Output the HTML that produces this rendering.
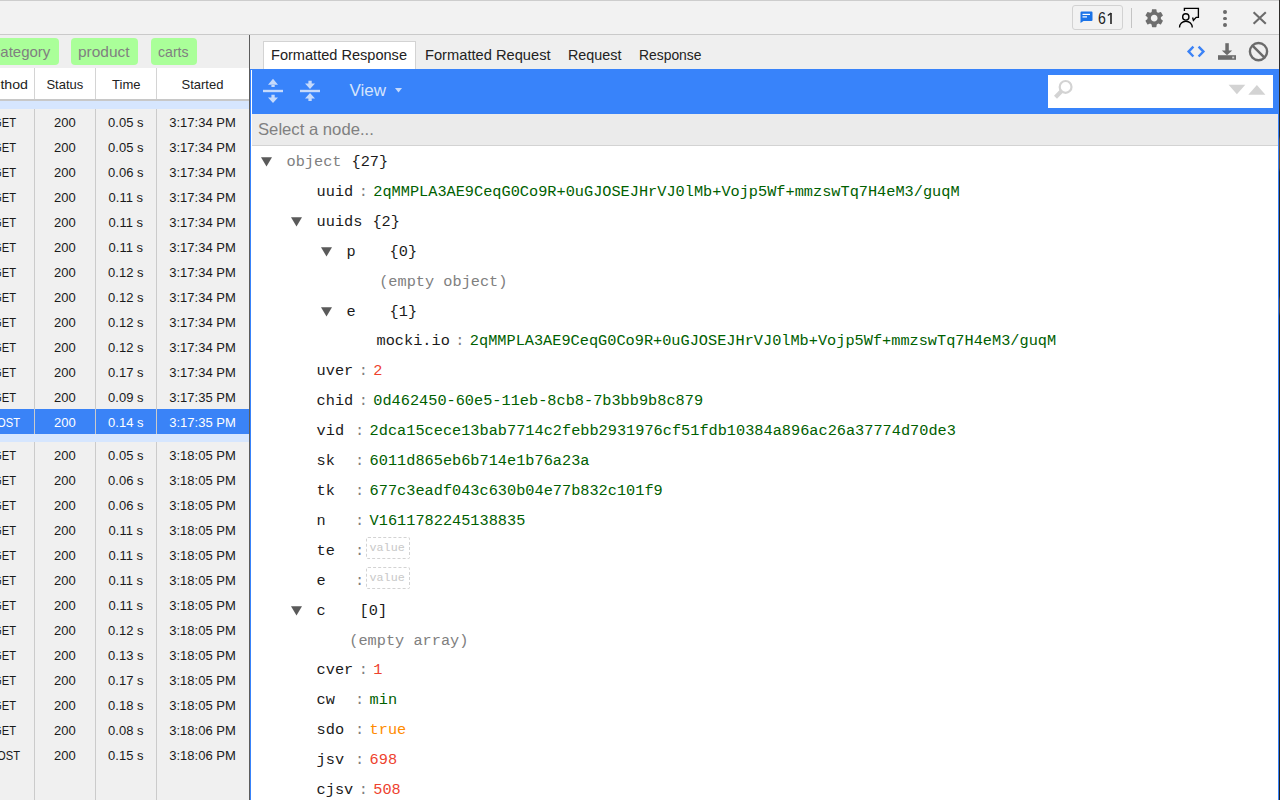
<!DOCTYPE html>
<html><head><meta charset="utf-8"><title>JSON</title>
<style>
html,body{margin:0;padding:0;}
body{width:1280px;height:800px;overflow:hidden;position:relative;background:#fff;font-family:"Liberation Sans",sans-serif;}
body>div,body>svg{position:absolute;box-sizing:border-box;}
.t{white-space:pre;}
</style></head><body>
<div style="left:0px;top:0px;width:1280px;height:35px;background:#f2f2f2;"></div>
<div style="left:0px;top:0px;width:1280px;height:1px;background:#cdcdcd;"></div>
<div style="left:0px;top:34px;width:1280px;height:1px;background:#cacaca;"></div>
<div style="left:1072px;top:5px;width:51px;height:25px;border:1px solid #d2d2d2;border-radius:3px;"></div>
<svg style="left:1080px;top:11px" width="13" height="12" viewBox="0 0 13 12"><path d="M1.5 0.5h10a1 1 0 0 1 1 1v7.5a1 1 0 0 1-1 1H3.5L0.5 12V1.5a1 1 0 0 1 1-1z" fill="#1a73e8"/><rect x="2.5" y="2.8" width="7.5" height="1.2" fill="#fff"/><rect x="2.5" y="5.3" width="4.5" height="1.2" fill="#fff"/></svg>
<div class="t" style="left:1097.90px;top:10.76px;font:16.0px/16.0px 'Liberation Sans', sans-serif;color:#222;transform:scaleX(0.88);transform-origin:left center;">6</div>
<svg style="left:1104px;top:11px" width="10" height="14" viewBox="0 0 10 14"><path d="M7.0 2.0V13.0" stroke="#222" stroke-width="1.6"/><path d="M7.1 2.1L3.8 4.5" stroke="#222" stroke-width="1.4"/></svg>
<div style="left:1131px;top:8px;width:1px;height:20px;background:#c4c4c4;"></div>
<svg style="left:1143.2px;top:7px" width="22.4" height="22.4" viewBox="0 0 24 24"><path fill="#6e6e6e" d="M19.14 12.94c.04-.3.06-.61.06-.94 0-.32-.02-.64-.07-.94l2.03-1.58a.49.49 0 0 0 .12-.61l-1.92-3.32a.488.488 0 0 0-.59-.22l-2.39.96c-.5-.38-1.03-.7-1.62-.94l-.36-2.54a.484.484 0 0 0-.48-.41h-3.84c-.24 0-.43.17-.47.41l-.36 2.54c-.59.24-1.13.57-1.62.94l-2.39-.96c-.22-.08-.47 0-.59.22L2.74 8.87c-.12.21-.08.47.12.61l2.03 1.58c-.05.3-.09.63-.09.94s.02.64.07.94l-2.03 1.58a.49.49 0 0 0-.12.61l1.92 3.32c.12.22.37.29.59.22l2.39-.96c.5.38 1.03.7 1.62.94l.36 2.54c.05.24.24.41.48.41h3.84c.24 0 .44-.17.47-.41l.36-2.54c.59-.24 1.13-.56 1.62-.94l2.39.96c.22.08.47 0 .59-.22l1.92-3.32c.12-.22.07-.47-.12-.61l-2.01-1.58zM12 15.6c-1.98 0-3.6-1.62-3.6-3.6s1.62-3.6 3.6-3.6 3.6 1.62 3.6 3.6-1.62 3.6-3.6 3.6z"/></svg>
<svg style="left:1175px;top:5px" width="28" height="25" viewBox="0 0 28 25"><g fill="none" stroke="#000" stroke-width="1.35"><path d="M9.4 6V3.4H23.4V12.3H21.2L18.4 15.3L17.6 12.5"/><circle cx="10.8" cy="11.9" r="3.15"/><path d="M4.5 22.5A6.3 6.2 0 0 1 17.3 22.5"/></g></svg>
<div style="left:1223.1px;top:10.1px;width:3.8px;height:3.8px;border-radius:50%;background:#6b6b6b"></div>
<div style="left:1223.1px;top:16.6px;width:3.8px;height:3.8px;border-radius:50%;background:#6b6b6b"></div>
<div style="left:1223.1px;top:23.0px;width:3.8px;height:3.8px;border-radius:50%;background:#6b6b6b"></div>
<svg style="left:1252px;top:11px" width="15" height="14" viewBox="0 0 15 14"><path d="M1.6 1.2L13.8 12.8M13.8 1.2L1.6 12.8" stroke="#6b6b6b" stroke-width="2.1"/></svg>
<div style="left:0px;top:35px;width:249px;height:765px;background:#efefef;"></div>
<div style="left:0px;top:109px;width:249px;height:691px;background:#f0f0f0;"></div>
<div style="left:-12px;top:38px;width:71px;height:27px;background:#aaff99;border-radius:4px;"></div>
<div class="t" style="left:-7.20px;top:43.90px;font:15px/15px 'Liberation Sans', sans-serif;color:#808080;">category</div>
<div style="left:71px;top:38px;width:67px;height:27px;background:#aaff99;border-radius:4px;"></div>
<div class="t" style="left:77.80px;top:43.90px;font:15px/15px 'Liberation Sans', sans-serif;color:#808080;transform:scaleX(1.03);transform-origin:left center;">product</div>
<div style="left:151px;top:38px;width:46px;height:27px;background:#aaff99;border-radius:4px;"></div>
<div class="t" style="left:158.40px;top:43.90px;font:15px/15px 'Liberation Sans', sans-serif;color:#808080;transform:scaleX(0.94);transform-origin:left center;">carts</div>
<div style="left:0px;top:68px;width:249px;height:31px;background:#ffffff;"></div>
<div style="left:0px;top:99px;width:249px;height:2px;background:#c8c8c8;"></div>
<div style="left:34px;top:68px;width:1px;height:31px;background:#d4d4d4;"></div>
<div style="left:95px;top:68px;width:1px;height:31px;background:#d4d4d4;"></div>
<div style="left:156px;top:68px;width:1px;height:31px;background:#d4d4d4;"></div>
<div class="t" style="left:-32.20px;top:78.00px;font:13px/13px 'Liberation Sans', sans-serif;color:#222;width:60px;text-align:right;transform:scaleX(1.09);transform-origin:right center;">Method</div>
<div class="t" style="left:34.90px;top:78.00px;font:13px/13px 'Liberation Sans', sans-serif;color:#222;width:60px;text-align:center;">Status</div>
<div class="t" style="left:96.30px;top:78.00px;font:13px/13px 'Liberation Sans', sans-serif;color:#222;width:60px;text-align:center;">Time</div>
<div class="t" style="left:157.50px;top:78.00px;font:13px/13px 'Liberation Sans', sans-serif;color:#222;width:90px;text-align:center;">Started</div>
<div style="left:0px;top:101px;width:249px;height:8px;background:#d6e6fe;"></div>
<div style="left:34px;top:109px;width:1px;height:325px;background:#cbcbcb;"></div>
<div style="left:34px;top:442px;width:1px;height:358px;background:#cbcbcb;"></div>
<div style="left:95px;top:109px;width:1px;height:325px;background:#cbcbcb;"></div>
<div style="left:95px;top:442px;width:1px;height:358px;background:#cbcbcb;"></div>
<div style="left:156px;top:109px;width:1px;height:325px;background:#cbcbcb;"></div>
<div style="left:156px;top:442px;width:1px;height:358px;background:#cbcbcb;"></div>
<div class="t" style="left:-34.40px;top:116.10px;font:13px/13px 'Liberation Sans', sans-serif;color:#1a1a1a;width:50px;text-align:right;transform:scaleX(0.86);transform-origin:right center;">GET</div>
<div class="t" style="left:34.90px;top:116.10px;font:13px/13px 'Liberation Sans', sans-serif;color:#1a1a1a;width:60px;text-align:center;">200</div>
<div class="t" style="left:95.80px;top:116.10px;font:13px/13px 'Liberation Sans', sans-serif;color:#1a1a1a;width:60px;text-align:center;">0.05 s</div>
<div class="t" style="left:157.50px;top:116.10px;font:13px/13px 'Liberation Sans', sans-serif;color:#1a1a1a;width:90px;text-align:center;">3:17:34 PM</div>
<div class="t" style="left:-34.40px;top:141.10px;font:13px/13px 'Liberation Sans', sans-serif;color:#1a1a1a;width:50px;text-align:right;transform:scaleX(0.86);transform-origin:right center;">GET</div>
<div class="t" style="left:34.90px;top:141.10px;font:13px/13px 'Liberation Sans', sans-serif;color:#1a1a1a;width:60px;text-align:center;">200</div>
<div class="t" style="left:95.80px;top:141.10px;font:13px/13px 'Liberation Sans', sans-serif;color:#1a1a1a;width:60px;text-align:center;">0.05 s</div>
<div class="t" style="left:157.50px;top:141.10px;font:13px/13px 'Liberation Sans', sans-serif;color:#1a1a1a;width:90px;text-align:center;">3:17:34 PM</div>
<div class="t" style="left:-34.40px;top:166.10px;font:13px/13px 'Liberation Sans', sans-serif;color:#1a1a1a;width:50px;text-align:right;transform:scaleX(0.86);transform-origin:right center;">GET</div>
<div class="t" style="left:34.90px;top:166.10px;font:13px/13px 'Liberation Sans', sans-serif;color:#1a1a1a;width:60px;text-align:center;">200</div>
<div class="t" style="left:95.80px;top:166.10px;font:13px/13px 'Liberation Sans', sans-serif;color:#1a1a1a;width:60px;text-align:center;">0.06 s</div>
<div class="t" style="left:157.50px;top:166.10px;font:13px/13px 'Liberation Sans', sans-serif;color:#1a1a1a;width:90px;text-align:center;">3:17:34 PM</div>
<div class="t" style="left:-34.40px;top:191.10px;font:13px/13px 'Liberation Sans', sans-serif;color:#1a1a1a;width:50px;text-align:right;transform:scaleX(0.86);transform-origin:right center;">GET</div>
<div class="t" style="left:34.90px;top:191.10px;font:13px/13px 'Liberation Sans', sans-serif;color:#1a1a1a;width:60px;text-align:center;">200</div>
<div class="t" style="left:95.80px;top:191.10px;font:13px/13px 'Liberation Sans', sans-serif;color:#1a1a1a;width:60px;text-align:center;">0.11 s</div>
<div class="t" style="left:157.50px;top:191.10px;font:13px/13px 'Liberation Sans', sans-serif;color:#1a1a1a;width:90px;text-align:center;">3:17:34 PM</div>
<div class="t" style="left:-34.40px;top:216.10px;font:13px/13px 'Liberation Sans', sans-serif;color:#1a1a1a;width:50px;text-align:right;transform:scaleX(0.86);transform-origin:right center;">GET</div>
<div class="t" style="left:34.90px;top:216.10px;font:13px/13px 'Liberation Sans', sans-serif;color:#1a1a1a;width:60px;text-align:center;">200</div>
<div class="t" style="left:95.80px;top:216.10px;font:13px/13px 'Liberation Sans', sans-serif;color:#1a1a1a;width:60px;text-align:center;">0.11 s</div>
<div class="t" style="left:157.50px;top:216.10px;font:13px/13px 'Liberation Sans', sans-serif;color:#1a1a1a;width:90px;text-align:center;">3:17:34 PM</div>
<div class="t" style="left:-34.40px;top:241.10px;font:13px/13px 'Liberation Sans', sans-serif;color:#1a1a1a;width:50px;text-align:right;transform:scaleX(0.86);transform-origin:right center;">GET</div>
<div class="t" style="left:34.90px;top:241.10px;font:13px/13px 'Liberation Sans', sans-serif;color:#1a1a1a;width:60px;text-align:center;">200</div>
<div class="t" style="left:95.80px;top:241.10px;font:13px/13px 'Liberation Sans', sans-serif;color:#1a1a1a;width:60px;text-align:center;">0.11 s</div>
<div class="t" style="left:157.50px;top:241.10px;font:13px/13px 'Liberation Sans', sans-serif;color:#1a1a1a;width:90px;text-align:center;">3:17:34 PM</div>
<div class="t" style="left:-34.40px;top:266.10px;font:13px/13px 'Liberation Sans', sans-serif;color:#1a1a1a;width:50px;text-align:right;transform:scaleX(0.86);transform-origin:right center;">GET</div>
<div class="t" style="left:34.90px;top:266.10px;font:13px/13px 'Liberation Sans', sans-serif;color:#1a1a1a;width:60px;text-align:center;">200</div>
<div class="t" style="left:95.80px;top:266.10px;font:13px/13px 'Liberation Sans', sans-serif;color:#1a1a1a;width:60px;text-align:center;">0.12 s</div>
<div class="t" style="left:157.50px;top:266.10px;font:13px/13px 'Liberation Sans', sans-serif;color:#1a1a1a;width:90px;text-align:center;">3:17:34 PM</div>
<div class="t" style="left:-34.40px;top:291.10px;font:13px/13px 'Liberation Sans', sans-serif;color:#1a1a1a;width:50px;text-align:right;transform:scaleX(0.86);transform-origin:right center;">GET</div>
<div class="t" style="left:34.90px;top:291.10px;font:13px/13px 'Liberation Sans', sans-serif;color:#1a1a1a;width:60px;text-align:center;">200</div>
<div class="t" style="left:95.80px;top:291.10px;font:13px/13px 'Liberation Sans', sans-serif;color:#1a1a1a;width:60px;text-align:center;">0.12 s</div>
<div class="t" style="left:157.50px;top:291.10px;font:13px/13px 'Liberation Sans', sans-serif;color:#1a1a1a;width:90px;text-align:center;">3:17:34 PM</div>
<div class="t" style="left:-34.40px;top:316.10px;font:13px/13px 'Liberation Sans', sans-serif;color:#1a1a1a;width:50px;text-align:right;transform:scaleX(0.86);transform-origin:right center;">GET</div>
<div class="t" style="left:34.90px;top:316.10px;font:13px/13px 'Liberation Sans', sans-serif;color:#1a1a1a;width:60px;text-align:center;">200</div>
<div class="t" style="left:95.80px;top:316.10px;font:13px/13px 'Liberation Sans', sans-serif;color:#1a1a1a;width:60px;text-align:center;">0.12 s</div>
<div class="t" style="left:157.50px;top:316.10px;font:13px/13px 'Liberation Sans', sans-serif;color:#1a1a1a;width:90px;text-align:center;">3:17:34 PM</div>
<div class="t" style="left:-34.40px;top:341.10px;font:13px/13px 'Liberation Sans', sans-serif;color:#1a1a1a;width:50px;text-align:right;transform:scaleX(0.86);transform-origin:right center;">GET</div>
<div class="t" style="left:34.90px;top:341.10px;font:13px/13px 'Liberation Sans', sans-serif;color:#1a1a1a;width:60px;text-align:center;">200</div>
<div class="t" style="left:95.80px;top:341.10px;font:13px/13px 'Liberation Sans', sans-serif;color:#1a1a1a;width:60px;text-align:center;">0.12 s</div>
<div class="t" style="left:157.50px;top:341.10px;font:13px/13px 'Liberation Sans', sans-serif;color:#1a1a1a;width:90px;text-align:center;">3:17:34 PM</div>
<div class="t" style="left:-34.40px;top:366.10px;font:13px/13px 'Liberation Sans', sans-serif;color:#1a1a1a;width:50px;text-align:right;transform:scaleX(0.86);transform-origin:right center;">GET</div>
<div class="t" style="left:34.90px;top:366.10px;font:13px/13px 'Liberation Sans', sans-serif;color:#1a1a1a;width:60px;text-align:center;">200</div>
<div class="t" style="left:95.80px;top:366.10px;font:13px/13px 'Liberation Sans', sans-serif;color:#1a1a1a;width:60px;text-align:center;">0.17 s</div>
<div class="t" style="left:157.50px;top:366.10px;font:13px/13px 'Liberation Sans', sans-serif;color:#1a1a1a;width:90px;text-align:center;">3:17:34 PM</div>
<div class="t" style="left:-34.40px;top:391.10px;font:13px/13px 'Liberation Sans', sans-serif;color:#1a1a1a;width:50px;text-align:right;transform:scaleX(0.86);transform-origin:right center;">GET</div>
<div class="t" style="left:34.90px;top:391.10px;font:13px/13px 'Liberation Sans', sans-serif;color:#1a1a1a;width:60px;text-align:center;">200</div>
<div class="t" style="left:95.80px;top:391.10px;font:13px/13px 'Liberation Sans', sans-serif;color:#1a1a1a;width:60px;text-align:center;">0.09 s</div>
<div class="t" style="left:157.50px;top:391.10px;font:13px/13px 'Liberation Sans', sans-serif;color:#1a1a1a;width:90px;text-align:center;">3:17:35 PM</div>
<div style="left:0px;top:409px;width:249px;height:25px;background:#3a83f7;"></div>
<div style="left:34px;top:409px;width:1px;height:25px;background:#cbcbcb;"></div>
<div style="left:95px;top:409px;width:1px;height:25px;background:#cbcbcb;"></div>
<div style="left:156px;top:409px;width:1px;height:25px;background:#cbcbcb;"></div>
<div class="t" style="left:-29.80px;top:416.10px;font:13px/13px 'Liberation Sans', sans-serif;color:#ffffff;width:50px;text-align:right;transform:scaleX(0.86);transform-origin:right center;">POST</div>
<div class="t" style="left:34.90px;top:416.10px;font:13px/13px 'Liberation Sans', sans-serif;color:#ffffff;width:60px;text-align:center;">200</div>
<div class="t" style="left:95.80px;top:416.10px;font:13px/13px 'Liberation Sans', sans-serif;color:#ffffff;width:60px;text-align:center;">0.14 s</div>
<div class="t" style="left:157.50px;top:416.10px;font:13px/13px 'Liberation Sans', sans-serif;color:#ffffff;width:90px;text-align:center;">3:17:35 PM</div>
<div style="left:0px;top:434px;width:249px;height:8px;background:#d6e6fe;"></div>
<div class="t" style="left:-34.40px;top:449.10px;font:13px/13px 'Liberation Sans', sans-serif;color:#1a1a1a;width:50px;text-align:right;transform:scaleX(0.86);transform-origin:right center;">GET</div>
<div class="t" style="left:34.90px;top:449.10px;font:13px/13px 'Liberation Sans', sans-serif;color:#1a1a1a;width:60px;text-align:center;">200</div>
<div class="t" style="left:95.80px;top:449.10px;font:13px/13px 'Liberation Sans', sans-serif;color:#1a1a1a;width:60px;text-align:center;">0.05 s</div>
<div class="t" style="left:157.50px;top:449.10px;font:13px/13px 'Liberation Sans', sans-serif;color:#1a1a1a;width:90px;text-align:center;">3:18:05 PM</div>
<div class="t" style="left:-34.40px;top:474.10px;font:13px/13px 'Liberation Sans', sans-serif;color:#1a1a1a;width:50px;text-align:right;transform:scaleX(0.86);transform-origin:right center;">GET</div>
<div class="t" style="left:34.90px;top:474.10px;font:13px/13px 'Liberation Sans', sans-serif;color:#1a1a1a;width:60px;text-align:center;">200</div>
<div class="t" style="left:95.80px;top:474.10px;font:13px/13px 'Liberation Sans', sans-serif;color:#1a1a1a;width:60px;text-align:center;">0.06 s</div>
<div class="t" style="left:157.50px;top:474.10px;font:13px/13px 'Liberation Sans', sans-serif;color:#1a1a1a;width:90px;text-align:center;">3:18:05 PM</div>
<div class="t" style="left:-34.40px;top:499.10px;font:13px/13px 'Liberation Sans', sans-serif;color:#1a1a1a;width:50px;text-align:right;transform:scaleX(0.86);transform-origin:right center;">GET</div>
<div class="t" style="left:34.90px;top:499.10px;font:13px/13px 'Liberation Sans', sans-serif;color:#1a1a1a;width:60px;text-align:center;">200</div>
<div class="t" style="left:95.80px;top:499.10px;font:13px/13px 'Liberation Sans', sans-serif;color:#1a1a1a;width:60px;text-align:center;">0.06 s</div>
<div class="t" style="left:157.50px;top:499.10px;font:13px/13px 'Liberation Sans', sans-serif;color:#1a1a1a;width:90px;text-align:center;">3:18:05 PM</div>
<div class="t" style="left:-34.40px;top:524.10px;font:13px/13px 'Liberation Sans', sans-serif;color:#1a1a1a;width:50px;text-align:right;transform:scaleX(0.86);transform-origin:right center;">GET</div>
<div class="t" style="left:34.90px;top:524.10px;font:13px/13px 'Liberation Sans', sans-serif;color:#1a1a1a;width:60px;text-align:center;">200</div>
<div class="t" style="left:95.80px;top:524.10px;font:13px/13px 'Liberation Sans', sans-serif;color:#1a1a1a;width:60px;text-align:center;">0.11 s</div>
<div class="t" style="left:157.50px;top:524.10px;font:13px/13px 'Liberation Sans', sans-serif;color:#1a1a1a;width:90px;text-align:center;">3:18:05 PM</div>
<div class="t" style="left:-34.40px;top:549.10px;font:13px/13px 'Liberation Sans', sans-serif;color:#1a1a1a;width:50px;text-align:right;transform:scaleX(0.86);transform-origin:right center;">GET</div>
<div class="t" style="left:34.90px;top:549.10px;font:13px/13px 'Liberation Sans', sans-serif;color:#1a1a1a;width:60px;text-align:center;">200</div>
<div class="t" style="left:95.80px;top:549.10px;font:13px/13px 'Liberation Sans', sans-serif;color:#1a1a1a;width:60px;text-align:center;">0.11 s</div>
<div class="t" style="left:157.50px;top:549.10px;font:13px/13px 'Liberation Sans', sans-serif;color:#1a1a1a;width:90px;text-align:center;">3:18:05 PM</div>
<div class="t" style="left:-34.40px;top:574.10px;font:13px/13px 'Liberation Sans', sans-serif;color:#1a1a1a;width:50px;text-align:right;transform:scaleX(0.86);transform-origin:right center;">GET</div>
<div class="t" style="left:34.90px;top:574.10px;font:13px/13px 'Liberation Sans', sans-serif;color:#1a1a1a;width:60px;text-align:center;">200</div>
<div class="t" style="left:95.80px;top:574.10px;font:13px/13px 'Liberation Sans', sans-serif;color:#1a1a1a;width:60px;text-align:center;">0.11 s</div>
<div class="t" style="left:157.50px;top:574.10px;font:13px/13px 'Liberation Sans', sans-serif;color:#1a1a1a;width:90px;text-align:center;">3:18:05 PM</div>
<div class="t" style="left:-34.40px;top:599.10px;font:13px/13px 'Liberation Sans', sans-serif;color:#1a1a1a;width:50px;text-align:right;transform:scaleX(0.86);transform-origin:right center;">GET</div>
<div class="t" style="left:34.90px;top:599.10px;font:13px/13px 'Liberation Sans', sans-serif;color:#1a1a1a;width:60px;text-align:center;">200</div>
<div class="t" style="left:95.80px;top:599.10px;font:13px/13px 'Liberation Sans', sans-serif;color:#1a1a1a;width:60px;text-align:center;">0.11 s</div>
<div class="t" style="left:157.50px;top:599.10px;font:13px/13px 'Liberation Sans', sans-serif;color:#1a1a1a;width:90px;text-align:center;">3:18:05 PM</div>
<div class="t" style="left:-34.40px;top:624.10px;font:13px/13px 'Liberation Sans', sans-serif;color:#1a1a1a;width:50px;text-align:right;transform:scaleX(0.86);transform-origin:right center;">GET</div>
<div class="t" style="left:34.90px;top:624.10px;font:13px/13px 'Liberation Sans', sans-serif;color:#1a1a1a;width:60px;text-align:center;">200</div>
<div class="t" style="left:95.80px;top:624.10px;font:13px/13px 'Liberation Sans', sans-serif;color:#1a1a1a;width:60px;text-align:center;">0.12 s</div>
<div class="t" style="left:157.50px;top:624.10px;font:13px/13px 'Liberation Sans', sans-serif;color:#1a1a1a;width:90px;text-align:center;">3:18:05 PM</div>
<div class="t" style="left:-34.40px;top:649.10px;font:13px/13px 'Liberation Sans', sans-serif;color:#1a1a1a;width:50px;text-align:right;transform:scaleX(0.86);transform-origin:right center;">GET</div>
<div class="t" style="left:34.90px;top:649.10px;font:13px/13px 'Liberation Sans', sans-serif;color:#1a1a1a;width:60px;text-align:center;">200</div>
<div class="t" style="left:95.80px;top:649.10px;font:13px/13px 'Liberation Sans', sans-serif;color:#1a1a1a;width:60px;text-align:center;">0.13 s</div>
<div class="t" style="left:157.50px;top:649.10px;font:13px/13px 'Liberation Sans', sans-serif;color:#1a1a1a;width:90px;text-align:center;">3:18:05 PM</div>
<div class="t" style="left:-34.40px;top:674.10px;font:13px/13px 'Liberation Sans', sans-serif;color:#1a1a1a;width:50px;text-align:right;transform:scaleX(0.86);transform-origin:right center;">GET</div>
<div class="t" style="left:34.90px;top:674.10px;font:13px/13px 'Liberation Sans', sans-serif;color:#1a1a1a;width:60px;text-align:center;">200</div>
<div class="t" style="left:95.80px;top:674.10px;font:13px/13px 'Liberation Sans', sans-serif;color:#1a1a1a;width:60px;text-align:center;">0.17 s</div>
<div class="t" style="left:157.50px;top:674.10px;font:13px/13px 'Liberation Sans', sans-serif;color:#1a1a1a;width:90px;text-align:center;">3:18:05 PM</div>
<div class="t" style="left:-34.40px;top:699.10px;font:13px/13px 'Liberation Sans', sans-serif;color:#1a1a1a;width:50px;text-align:right;transform:scaleX(0.86);transform-origin:right center;">GET</div>
<div class="t" style="left:34.90px;top:699.10px;font:13px/13px 'Liberation Sans', sans-serif;color:#1a1a1a;width:60px;text-align:center;">200</div>
<div class="t" style="left:95.80px;top:699.10px;font:13px/13px 'Liberation Sans', sans-serif;color:#1a1a1a;width:60px;text-align:center;">0.18 s</div>
<div class="t" style="left:157.50px;top:699.10px;font:13px/13px 'Liberation Sans', sans-serif;color:#1a1a1a;width:90px;text-align:center;">3:18:05 PM</div>
<div class="t" style="left:-34.40px;top:724.10px;font:13px/13px 'Liberation Sans', sans-serif;color:#1a1a1a;width:50px;text-align:right;transform:scaleX(0.86);transform-origin:right center;">GET</div>
<div class="t" style="left:34.90px;top:724.10px;font:13px/13px 'Liberation Sans', sans-serif;color:#1a1a1a;width:60px;text-align:center;">200</div>
<div class="t" style="left:95.80px;top:724.10px;font:13px/13px 'Liberation Sans', sans-serif;color:#1a1a1a;width:60px;text-align:center;">0.08 s</div>
<div class="t" style="left:157.50px;top:724.10px;font:13px/13px 'Liberation Sans', sans-serif;color:#1a1a1a;width:90px;text-align:center;">3:18:06 PM</div>
<div class="t" style="left:-29.80px;top:749.10px;font:13px/13px 'Liberation Sans', sans-serif;color:#1a1a1a;width:50px;text-align:right;transform:scaleX(0.86);transform-origin:right center;">POST</div>
<div class="t" style="left:34.90px;top:749.10px;font:13px/13px 'Liberation Sans', sans-serif;color:#1a1a1a;width:60px;text-align:center;">200</div>
<div class="t" style="left:95.80px;top:749.10px;font:13px/13px 'Liberation Sans', sans-serif;color:#1a1a1a;width:60px;text-align:center;">0.15 s</div>
<div class="t" style="left:157.50px;top:749.10px;font:13px/13px 'Liberation Sans', sans-serif;color:#1a1a1a;width:90px;text-align:center;">3:18:06 PM</div>
<div style="left:249px;top:35px;width:1px;height:765px;background:#5c5c5c;"></div>
<div style="left:250px;top:35px;width:1030px;height:34px;background:#efefef;"></div>
<div style="left:263px;top:41px;width:153px;height:28px;background:#fff;border:1px solid #d3d3d3;border-bottom:none"></div>
<div class="t" style="left:270.90px;top:47.30px;font:15px/15px 'Liberation Sans', sans-serif;color:#222;transform:scaleX(0.971);transform-origin:left center;">Formatted Response</div>
<div class="t" style="left:424.50px;top:47.30px;font:15px/15px 'Liberation Sans', sans-serif;color:#222;transform:scaleX(0.978);transform-origin:left center;">Formatted Request</div>
<div class="t" style="left:567.80px;top:47.30px;font:15px/15px 'Liberation Sans', sans-serif;color:#222;transform:scaleX(0.955);transform-origin:left center;">Request</div>
<div class="t" style="left:638.60px;top:47.30px;font:15px/15px 'Liberation Sans', sans-serif;color:#222;transform:scaleX(0.925);transform-origin:left center;">Response</div>
<svg style="left:1185px;top:44px" width="22" height="15" viewBox="0 0 22 15"><path d="M8.4 2.7L3.6 7.6L8.4 12.5M13.6 2.7L18.4 7.6L13.6 12.5" fill="none" stroke="#3b82f6" stroke-width="2.4"/></svg>
<svg style="left:1217px;top:42px" width="20" height="19" viewBox="0 0 20 19"><rect x="8.3" y="1.2" width="3.5" height="8" fill="#6b6b6b"/><path d="M4.8 8.6H15.2L10 13.2Z" fill="#6b6b6b"/><rect x="1" y="13.2" width="18" height="4.6" fill="#6b6b6b"/><rect x="15.2" y="14.6" width="2" height="1.8" fill="#cfcfcf"/></svg>
<svg style="left:1247px;top:40px" width="24" height="24" viewBox="0 0 24 24"><circle cx="11.5" cy="11.6" r="8.6" fill="none" stroke="#6b6b6b" stroke-width="2.4"/><path d="M5.5 5.6L17.5 17.6" stroke="#6b6b6b" stroke-width="2.4"/></svg>
<div style="left:250px;top:69px;width:1px;height:731px;background:#3883fa;"></div>
<div style="left:251px;top:69px;width:1px;height:731px;background:#ffffff;"></div>
<div style="left:1278px;top:69px;width:1px;height:731px;background:#3883fa;"></div>
<div style="left:1279px;top:0px;width:1px;height:800px;background:linear-gradient(#2e2c2a 0,#2e2c2a 17%,#6a4a2a 17.5%,#6a4a2a 21%,#2a2622 21.5%,#2a2622 37%,#5a4028 37.5%,#5a4028 39%,#25221e 39.5%,#25221e 100%);"></div>
<div style="left:252px;top:69px;width:1026px;height:45px;background:#3883fa;"></div>
<div style="left:250px;top:69px;width:1029px;height:1px;background:#3883fa;"></div>
<svg style="left:262px;top:77px" width="22" height="28" viewBox="0 0 22 28"><rect x="1" y="12.8" width="20" height="2.4" fill="#c6dafb"/><path d="M6 7.7H16L11 1.8Z M9.4 7.6h3.3v2.5h-3.3z" fill="#c6dafb"/><path d="M6 20.5H16L11 26.1Z M9.4 17.8h3.3v2.8h-3.3z" fill="#c6dafb"/></svg>
<svg style="left:299px;top:77px" width="22" height="28" viewBox="0 0 22 28"><rect x="1" y="12.8" width="20" height="2.4" fill="#c6dafb"/><path d="M6 6.6H16L11 12.1Z M9.4 3.8h3.3v2.9h-3.3z" fill="#c6dafb"/><path d="M6 21.6H16L11 15.9Z M9.4 21.5h3.3v2.6h-3.3z" fill="#c6dafb"/></svg>
<div class="t" style="left:349.50px;top:81.61px;font:17px/17px 'Liberation Sans', sans-serif;color:#d5e4fc;">View</div>
<svg style="left:394px;top:87px" width="9" height="7" viewBox="0 0 9 7"><path d="M1 1H8L4.5 5.5Z" fill="#c6dafb"/></svg>
<div style="left:1048px;top:75px;width:225px;height:33px;background:#ffffff;"></div>
<svg style="left:1052px;top:78px" width="24" height="24" viewBox="0 0 24 24"><circle cx="13.6" cy="8.9" r="5.9" fill="none" stroke="#d3d3d3" stroke-width="2.2"/><path d="M9.6 13L3.5 19.2" stroke="#d3d3d3" stroke-width="4.2"/></svg>
<svg style="left:1226px;top:82px" width="42" height="16" viewBox="0 0 42 16"><path d="M2.6 2.8H19.3L10.9 12.2Z" fill="#d3d3d3"/><path d="M22.3 12.8H39.4L30.9 2.9Z" fill="#d3d3d3"/></svg>
<div style="left:252px;top:114px;width:1026px;height:31px;background:#ebebeb;"></div>
<div style="left:252px;top:145px;width:1026px;height:1px;background:#d3d3d3;"></div>
<div class="t" style="left:257.50px;top:120.93px;font:16.5px/16.5px 'Liberation Sans', sans-serif;color:#808080;transform:scaleX(1.01);transform-origin:left center;">Select a node...</div>
<div style="left:252px;top:146px;width:1026px;height:654px;background:#ffffff;"></div>
<svg style="left:261.3px;top:157.00px" width="12" height="10" viewBox="0 0 12 10"><path d="M0 0.2H11L5.5 9.5Z" fill="#5a5a5a"/></svg>
<div class="t" style="left:286.50px;top:155.04px;font:15.28px/15.28px 'Liberation Mono', monospace;color:#808080;">object</div>
<div class="t" style="left:351.50px;top:155.04px;font:15.28px/15.28px 'Liberation Mono', monospace;color:#1a1a1a;">{27}</div>
<div class="t" style="left:316.60px;top:184.95px;font:15.28px/15.28px 'Liberation Mono', monospace;color:#1a1a1a;">uuid</div>
<div class="t" style="left:358.68px;top:184.95px;font:15.28px/15.28px 'Liberation Mono', monospace;color:#808080;">:</div>
<div class="t" style="left:373.27px;top:184.95px;font:15.28px/15.28px 'Liberation Mono', monospace;color:#006000;">2qMMPLA3AE9CeqG0Co9R+0uGJOSEJHrVJ0lMb+Vojp5Wf+mmzswTq7H4eM3/guqM</div>
<svg style="left:291.3px;top:216.81px" width="12" height="10" viewBox="0 0 12 10"><path d="M0 0.2H11L5.5 9.5Z" fill="#5a5a5a"/></svg>
<div class="t" style="left:316.60px;top:214.86px;font:15.28px/15.28px 'Liberation Mono', monospace;color:#1a1a1a;">uuids</div>
<div class="t" style="left:372.44px;top:214.86px;font:15.28px/15.28px 'Liberation Mono', monospace;color:#1a1a1a;">{2}</div>
<svg style="left:321.3px;top:246.72px" width="12" height="10" viewBox="0 0 12 10"><path d="M0 0.2H11L5.5 9.5Z" fill="#5a5a5a"/></svg>
<div class="t" style="left:346.60px;top:244.76px;font:15.28px/15.28px 'Liberation Mono', monospace;color:#1a1a1a;">p</div>
<div class="t" style="left:389.60px;top:244.76px;font:15.28px/15.28px 'Liberation Mono', monospace;color:#1a1a1a;">{0}</div>
<div class="t" style="left:379.20px;top:274.67px;font:15.28px/15.28px 'Liberation Mono', monospace;color:#808080;">(empty object)</div>
<svg style="left:321.3px;top:306.53px" width="12" height="10" viewBox="0 0 12 10"><path d="M0 0.2H11L5.5 9.5Z" fill="#5a5a5a"/></svg>
<div class="t" style="left:346.60px;top:304.58px;font:15.28px/15.28px 'Liberation Mono', monospace;color:#1a1a1a;">e</div>
<div class="t" style="left:389.60px;top:304.58px;font:15.28px/15.28px 'Liberation Mono', monospace;color:#1a1a1a;">{1}</div>
<div class="t" style="left:376.50px;top:334.49px;font:15.28px/15.28px 'Liberation Mono', monospace;color:#1a1a1a;">mocki.io</div>
<div class="t" style="left:455.25px;top:334.49px;font:15.28px/15.28px 'Liberation Mono', monospace;color:#808080;">:</div>
<div class="t" style="left:469.84px;top:334.49px;font:15.28px/15.28px 'Liberation Mono', monospace;color:#006000;">2qMMPLA3AE9CeqG0Co9R+0uGJOSEJHrVJ0lMb+Vojp5Wf+mmzswTq7H4eM3/guqM</div>
<div class="t" style="left:316.60px;top:364.39px;font:15.28px/15.28px 'Liberation Mono', monospace;color:#1a1a1a;">uver</div>
<div class="t" style="left:358.68px;top:364.39px;font:15.28px/15.28px 'Liberation Mono', monospace;color:#808080;">:</div>
<div class="t" style="left:373.27px;top:364.39px;font:15.28px/15.28px 'Liberation Mono', monospace;color:#ee422e;">2</div>
<div class="t" style="left:316.60px;top:394.30px;font:15.28px/15.28px 'Liberation Mono', monospace;color:#1a1a1a;">chid</div>
<div class="t" style="left:358.68px;top:394.30px;font:15.28px/15.28px 'Liberation Mono', monospace;color:#808080;">:</div>
<div class="t" style="left:373.27px;top:394.30px;font:15.28px/15.28px 'Liberation Mono', monospace;color:#006000;">0d462450-60e5-11eb-8cb8-7b3bb9b8c879</div>
<div class="t" style="left:316.60px;top:424.21px;font:15.28px/15.28px 'Liberation Mono', monospace;color:#1a1a1a;">vid</div>
<div class="t" style="left:355.02px;top:424.21px;font:15.28px/15.28px 'Liberation Mono', monospace;color:#808080;">:</div>
<div class="t" style="left:369.60px;top:424.21px;font:15.28px/15.28px 'Liberation Mono', monospace;color:#006000;">2dca15cece13bab7714c2febb2931976cf51fdb10384a896ac26a37774d70de3</div>
<div class="t" style="left:316.60px;top:454.11px;font:15.28px/15.28px 'Liberation Mono', monospace;color:#1a1a1a;">sk</div>
<div class="t" style="left:355.02px;top:454.11px;font:15.28px/15.28px 'Liberation Mono', monospace;color:#808080;">:</div>
<div class="t" style="left:369.60px;top:454.11px;font:15.28px/15.28px 'Liberation Mono', monospace;color:#006000;">6011d865eb6b714e1b76a23a</div>
<div class="t" style="left:316.60px;top:484.02px;font:15.28px/15.28px 'Liberation Mono', monospace;color:#1a1a1a;">tk</div>
<div class="t" style="left:355.02px;top:484.02px;font:15.28px/15.28px 'Liberation Mono', monospace;color:#808080;">:</div>
<div class="t" style="left:369.60px;top:484.02px;font:15.28px/15.28px 'Liberation Mono', monospace;color:#006000;">677c3eadf043c630b04e77b832c101f9</div>
<div class="t" style="left:316.60px;top:513.93px;font:15.28px/15.28px 'Liberation Mono', monospace;color:#1a1a1a;">n</div>
<div class="t" style="left:355.02px;top:513.93px;font:15.28px/15.28px 'Liberation Mono', monospace;color:#808080;">:</div>
<div class="t" style="left:369.60px;top:513.93px;font:15.28px/15.28px 'Liberation Mono', monospace;color:#006000;">V1611782245138835</div>
<div class="t" style="left:316.60px;top:543.83px;font:15.28px/15.28px 'Liberation Mono', monospace;color:#1a1a1a;">te</div>
<div class="t" style="left:355.02px;top:543.83px;font:15.28px/15.28px 'Liberation Mono', monospace;color:#808080;">:</div>
<div style="left:366.30px;top:537.24px;width:43.5px;height:22px;border:1px dashed #d3d3d3;border-radius:2px"></div>
<div class="t" style="left:369.60px;top:542.93px;font:11.7px/11.7px 'Liberation Mono', monospace;color:#c8c8c8;">value</div>
<div class="t" style="left:316.60px;top:573.74px;font:15.28px/15.28px 'Liberation Mono', monospace;color:#1a1a1a;">e</div>
<div class="t" style="left:355.02px;top:573.74px;font:15.28px/15.28px 'Liberation Mono', monospace;color:#808080;">:</div>
<div style="left:366.30px;top:567.15px;width:43.5px;height:22px;border:1px dashed #d3d3d3;border-radius:2px"></div>
<div class="t" style="left:369.60px;top:572.83px;font:11.7px/11.7px 'Liberation Mono', monospace;color:#c8c8c8;">value</div>
<svg style="left:291.3px;top:605.61px" width="12" height="10" viewBox="0 0 12 10"><path d="M0 0.2H11L5.5 9.5Z" fill="#5a5a5a"/></svg>
<div class="t" style="left:316.60px;top:603.65px;font:15.28px/15.28px 'Liberation Mono', monospace;color:#1a1a1a;">c</div>
<div class="t" style="left:359.60px;top:603.65px;font:15.28px/15.28px 'Liberation Mono', monospace;color:#1a1a1a;">[0]</div>
<div class="t" style="left:349.30px;top:633.56px;font:15.28px/15.28px 'Liberation Mono', monospace;color:#808080;">(empty array)</div>
<div class="t" style="left:316.60px;top:663.46px;font:15.28px/15.28px 'Liberation Mono', monospace;color:#1a1a1a;">cver</div>
<div class="t" style="left:358.68px;top:663.46px;font:15.28px/15.28px 'Liberation Mono', monospace;color:#808080;">:</div>
<div class="t" style="left:373.27px;top:663.46px;font:15.28px/15.28px 'Liberation Mono', monospace;color:#ee422e;">1</div>
<div class="t" style="left:316.60px;top:693.37px;font:15.28px/15.28px 'Liberation Mono', monospace;color:#1a1a1a;">cw</div>
<div class="t" style="left:355.02px;top:693.37px;font:15.28px/15.28px 'Liberation Mono', monospace;color:#808080;">:</div>
<div class="t" style="left:369.60px;top:693.37px;font:15.28px/15.28px 'Liberation Mono', monospace;color:#006000;">min</div>
<div class="t" style="left:316.60px;top:723.28px;font:15.28px/15.28px 'Liberation Mono', monospace;color:#1a1a1a;">sdo</div>
<div class="t" style="left:355.02px;top:723.28px;font:15.28px/15.28px 'Liberation Mono', monospace;color:#808080;">:</div>
<div class="t" style="left:369.60px;top:723.28px;font:15.28px/15.28px 'Liberation Mono', monospace;color:#ff8c00;">true</div>
<div class="t" style="left:316.60px;top:753.18px;font:15.28px/15.28px 'Liberation Mono', monospace;color:#1a1a1a;">jsv</div>
<div class="t" style="left:355.02px;top:753.18px;font:15.28px/15.28px 'Liberation Mono', monospace;color:#808080;">:</div>
<div class="t" style="left:369.60px;top:753.18px;font:15.28px/15.28px 'Liberation Mono', monospace;color:#ee422e;">698</div>
<div class="t" style="left:316.60px;top:783.09px;font:15.28px/15.28px 'Liberation Mono', monospace;color:#1a1a1a;">cjsv</div>
<div class="t" style="left:358.68px;top:783.09px;font:15.28px/15.28px 'Liberation Mono', monospace;color:#808080;">:</div>
<div class="t" style="left:373.27px;top:783.09px;font:15.28px/15.28px 'Liberation Mono', monospace;color:#ee422e;">508</div>
</body></html>
